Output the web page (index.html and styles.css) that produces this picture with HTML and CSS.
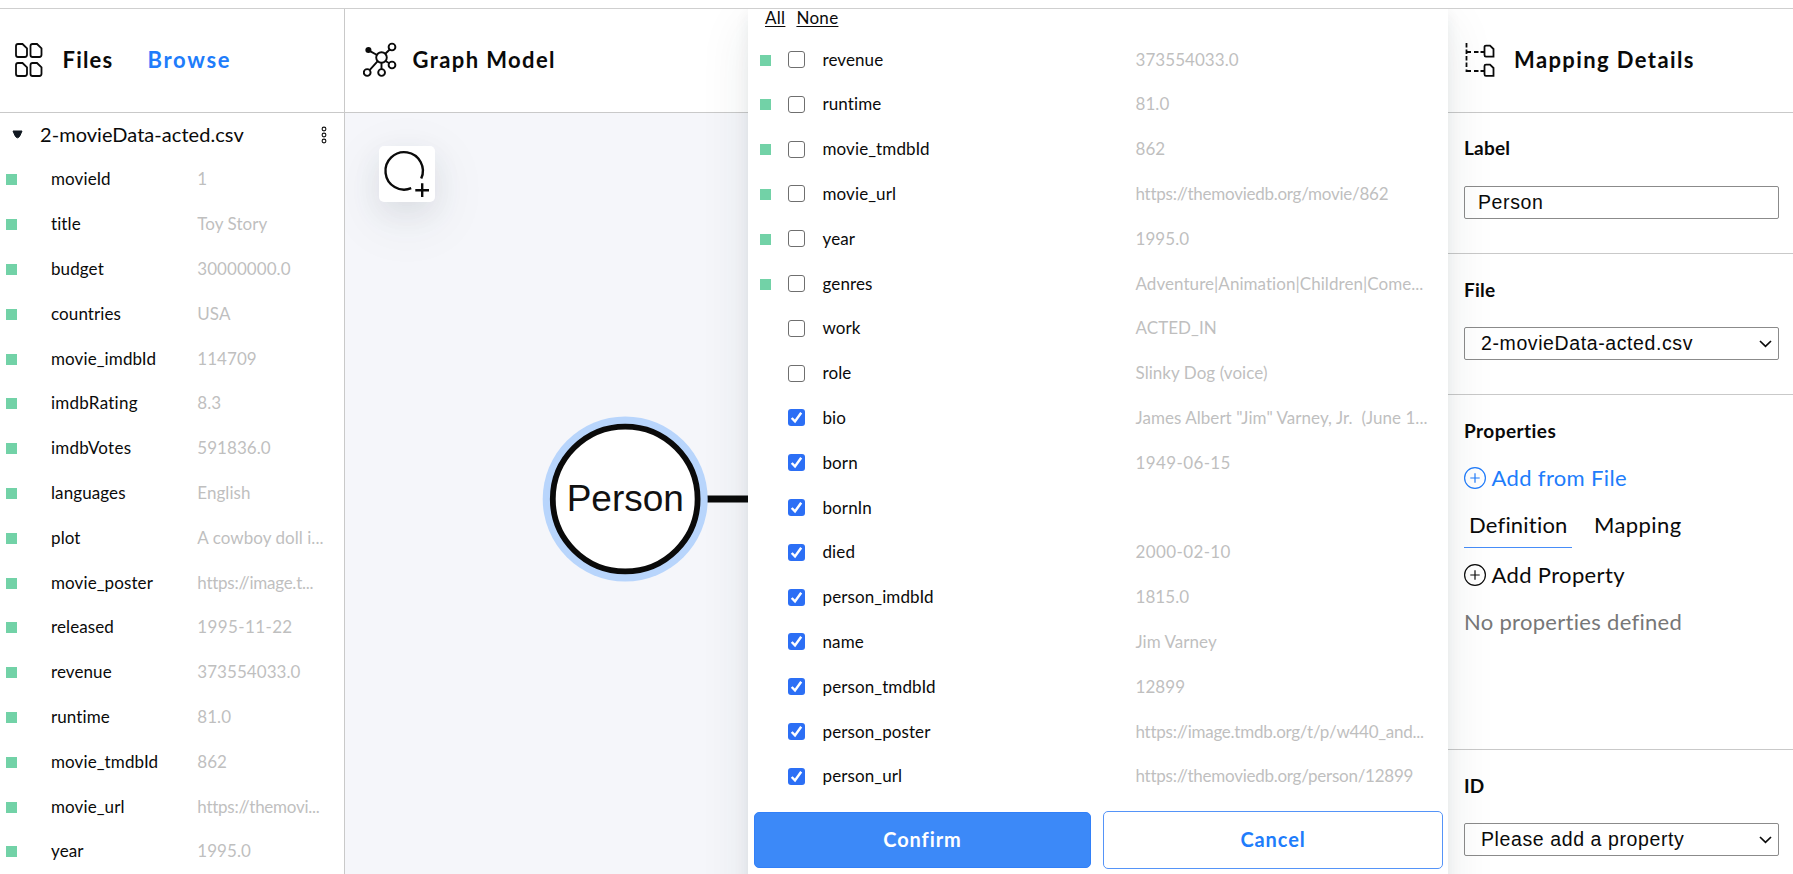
FILE: index.html
```html
<!DOCTYPE html>
<html lang="en">
<head>
<meta charset="utf-8">
<title>Graph Model</title>
<link rel="stylesheet" href="styles.css">
</head>
<body>
<div class="topbar"></div>
<main class="app">
  <section class="files">
    <header class="head head-files">
      <svg class="icon-files" width="28" height="35" viewBox="0 0 28 35" fill="none" stroke="#0a0a0a" stroke-width="1.8">
        <path id="doc" d="M3 1H7.5L12 5.3V11.8Q12 14 9.8 14H3Q1 14 1 12V3Q1 1 3 1Z"/>
        <use href="#doc" x="14.5"/><use href="#doc" y="19"/><use href="#doc" x="14.5" y="19"/>
      </svg>
      <h2 class="title t-files">Files</h2>
      <a class="title browse">Browse</a>
    </header>
    <div class="file-name">
      <svg width="11" height="10" viewBox="0 0 11 10"><path d="M1 1H10L8.2 5.2Q5.5 10.5 2.8 5.2Z" fill="#101820" stroke="#101820" stroke-linejoin="round"/></svg>
      <span class="csv">2-movieData-acted.csv</span>
      <svg class="dots" width="6" height="18" viewBox="0 0 6 18" fill="none" stroke="#111" stroke-width="1.1"><circle cx="3" cy="3" r="1.9"/><circle cx="3" cy="9" r="1.9"/><circle cx="3" cy="15" r="1.9"/></svg>
    </div>
    <ul class="rows">
      <li class="row"><i class="sq"></i><span class="key">movieId</span><span class="val">1</span></li>
      <li class="row"><i class="sq"></i><span class="key">title</span><span class="val">Toy Story</span></li>
      <li class="row"><i class="sq"></i><span class="key">budget</span><span class="val">30000000.0</span></li>
      <li class="row"><i class="sq"></i><span class="key">countries</span><span class="val">USA</span></li>
      <li class="row"><i class="sq"></i><span class="key">movie_imdbId</span><span class="val">114709</span></li>
      <li class="row"><i class="sq"></i><span class="key wide">imdbRating</span><span class="val">8.3</span></li>
      <li class="row"><i class="sq"></i><span class="key wide">imdbVotes</span><span class="val">591836.0</span></li>
      <li class="row"><i class="sq"></i><span class="key">languages</span><span class="val">English</span></li>
      <li class="row"><i class="sq"></i><span class="key">plot</span><span class="val">A cowboy doll i...</span></li>
      <li class="row"><i class="sq"></i><span class="key">movie_poster</span><span class="val url">https://image.t...</span></li>
      <li class="row"><i class="sq"></i><span class="key">released</span><span class="val date">1995-11-22</span></li>
      <li class="row"><i class="sq"></i><span class="key">revenue</span><span class="val">373554033.0</span></li>
      <li class="row"><i class="sq"></i><span class="key">runtime</span><span class="val">81.0</span></li>
      <li class="row"><i class="sq"></i><span class="key">movie_tmdbId</span><span class="val">862</span></li>
      <li class="row"><i class="sq"></i><span class="key">movie_url</span><span class="val url">https://themovi...</span></li>
      <li class="row"><i class="sq"></i><span class="key">year</span><span class="val">1995.0</span></li>
    </ul>
  </section>

  <section class="graph">
    <header class="head head-graph">
      <svg width="34" height="36" viewBox="0 0 34 36" fill="none" stroke="#0a0a0a" stroke-width="1.9">
        <circle cx="18.5" cy="15.5" r="5.3"/><circle cx="29" cy="5" r="3.4"/><circle cx="29" cy="23" r="3.4"/><circle cx="18.6" cy="30.5" r="3.4"/><circle cx="4.2" cy="30.5" r="3.4"/><circle cx="5.4" cy="8" r="2.1" fill="#0a0a0a"/>
        <path d="M7.5 9.3L14 13M22.3 11.8L26.7 7.5M22.5 19L26.3 21.2M18.5 20.8V27.1M14.7 19.2L6.6 28.1"/>
      </svg>
      <h2 class="title t-graph">Graph Model</h2>
    </header>
    <div class="canvas">
      <button class="add-node">
        <svg width="56" height="56" viewBox="0 0 56 56" fill="none" stroke="#0a0a0a" stroke-width="2.4"><path d="M32.2 42.2A18.7 18.7 0 1 1 42.2 32.6"/><path d="M43.2 37.3V51M36.3 44.2H50"/></svg>
      </button>
      <svg class="node" width="210" height="170" viewBox="540 414 210 170">
        <path d="M700 499H750" stroke="#0a0a0a" stroke-width="7"/>
        <circle cx="625.2" cy="499" r="82.5" fill="#b8d5fc"/>
        <circle cx="625.2" cy="499" r="72.4" fill="#fff" stroke="#0a0a0a" stroke-width="5.8"/>
        <text class="node-text" x="625.3" y="510.5" text-anchor="middle">Person</text>
      </svg>
    </div>
  </section>

  <section class="details">
    <header class="head head-details">
      <svg width="30" height="36" viewBox="0 0 30 36" fill="none" stroke="#0a0a0a" stroke-width="1.8">
        <path d="M1.5 1V5.5M1.5 7.5V12M1.5 14V18.5M1.5 20.5V25M1.5 27.5V29H6M9 29H13.5M15.5 29H19M1.5 10H6M9 10H13.5M15.5 10H19"/>
        <path d="M19.5 5Q19.5 3.6 21 3.6H25L28.5 7V14.6H21Q19.5 14.6 19.5 13ZM19.5 24Q19.5 22.6 21 22.6H25L28.5 26V33.8H21Q19.5 33.8 19.5 32.2Z"/>
      </svg>
      <h2 class="title t-details">Mapping Details</h2>
    </header>
    <div class="block b-label"><h3 class="sub">Label</h3><div class="field input">Person</div></div>
    <div class="block b-file"><h3 class="sub">File</h3><div class="field select"><span class="s-file">2-movieData-acted.csv</span><svg width="13" height="8" viewBox="0 0 13 8" fill="none" stroke="#0a0a0a" stroke-width="1.7"><path d="M1 1L6.5 6.3L12 1"/></svg></div></div>
    <div class="block b-props">
      <h3 class="sub s-props">Properties</h3>
      <div class="add blue"><svg width="22" height="22" viewBox="0 0 22 22" fill="none" stroke="currentColor" stroke-width="1.2"><circle cx="11" cy="11" r="10.4"/><path d="M11 6.3V15.7M6.3 11H15.7"/></svg><span class="a-file">Add from File</span></div>
      <div class="tabs"><span class="tab on">Definition</span><span class="tab t-map">Mapping</span></div>
      <div class="add"><svg width="22" height="22" viewBox="0 0 22 22" fill="none" stroke="currentColor" stroke-width="1.2"><circle cx="11" cy="11" r="10.4"/><path d="M11 6.3V15.7M6.3 11H15.7"/></svg><span class="a-prop">Add Property</span></div>
      <p class="empty">No properties defined</p>
    </div>
    <div class="block b-id"><h3 class="sub">ID</h3><div class="field select"><span class="s-id">Please add a property</span><svg width="13" height="8" viewBox="0 0 13 8" fill="none" stroke="#0a0a0a" stroke-width="1.7"><path d="M1 1L6.5 6.3L12 1"/></svg></div></div>
  </section>

  <div class="modal">
    <div class="pick"><u>All</u><u>None</u></div>
    <ul class="rows">
      <li class="row"><i class="sq"></i><i class="cb"></i><span class="key">revenue</span><span class="val">373554033.0</span></li>
      <li class="row"><i class="sq"></i><i class="cb"></i><span class="key">runtime</span><span class="val">81.0</span></li>
      <li class="row"><i class="sq"></i><i class="cb"></i><span class="key">movie_tmdbId</span><span class="val">862</span></li>
      <li class="row"><i class="sq"></i><i class="cb"></i><span class="key">movie_url</span><span class="val url">https://themoviedb.org/movie/862</span></li>
      <li class="row"><i class="sq"></i><i class="cb"></i><span class="key">year</span><span class="val">1995.0</span></li>
      <li class="row"><i class="sq"></i><i class="cb"></i><span class="key">genres</span><span class="val">Adventure|Animation|Children|Come...</span></li>
      <li class="row"><i class="sq none"></i><i class="cb"></i><span class="key">work</span><span class="val">ACTED_IN</span></li>
      <li class="row"><i class="sq none"></i><i class="cb"></i><span class="key">role</span><span class="val">Slinky Dog (voice)</span></li>
      <li class="row"><i class="sq none"></i><i class="cb on"><svg viewBox="0 0 17 17"><path d="M3.7 9L7 12.4L13.2 3.8"/></svg></i><span class="key">bio</span><span class="val">James Albert "Jim" Varney, Jr.  (June 1...</span></li>
      <li class="row"><i class="sq none"></i><i class="cb on"><svg viewBox="0 0 17 17"><path d="M3.7 9L7 12.4L13.2 3.8"/></svg></i><span class="key">born</span><span class="val date">1949-06-15</span></li>
      <li class="row"><i class="sq none"></i><i class="cb on"><svg viewBox="0 0 17 17"><path d="M3.7 9L7 12.4L13.2 3.8"/></svg></i><span class="key">bornIn</span></li>
      <li class="row"><i class="sq none"></i><i class="cb on"><svg viewBox="0 0 17 17"><path d="M3.7 9L7 12.4L13.2 3.8"/></svg></i><span class="key">died</span><span class="val date">2000-02-10</span></li>
      <li class="row"><i class="sq none"></i><i class="cb on"><svg viewBox="0 0 17 17"><path d="M3.7 9L7 12.4L13.2 3.8"/></svg></i><span class="key">person_imdbId</span><span class="val">1815.0</span></li>
      <li class="row"><i class="sq none"></i><i class="cb on"><svg viewBox="0 0 17 17"><path d="M3.7 9L7 12.4L13.2 3.8"/></svg></i><span class="key">name</span><span class="val">Jim Varney</span></li>
      <li class="row"><i class="sq none"></i><i class="cb on"><svg viewBox="0 0 17 17"><path d="M3.7 9L7 12.4L13.2 3.8"/></svg></i><span class="key">person_tmdbId</span><span class="val">12899</span></li>
      <li class="row"><i class="sq none"></i><i class="cb on"><svg viewBox="0 0 17 17"><path d="M3.7 9L7 12.4L13.2 3.8"/></svg></i><span class="key">person_poster</span><span class="val url">https://image.tmdb.org/t/p/w440_and...</span></li>
      <li class="row"><i class="sq none"></i><i class="cb on"><svg viewBox="0 0 17 17"><path d="M3.7 9L7 12.4L13.2 3.8"/></svg></i><span class="key">person_url</span><span class="val url">https://themoviedb.org/person/12899</span></li>
    </ul>
    <div class="actions"><button class="btn confirm">Confirm</button><button class="btn cancel">Cancel</button></div>
  </div>
</main>
</body>
</html>
```
FILE: styles.css
```css
* { box-sizing: border-box; }
body { margin: 0; height: 874px; overflow: hidden; background: #fff; color: #0a0a0a; font-family: Lato, sans-serif; font-size: 17px; }
svg { display: block; flex: none; }
h2, h3, p, ul { margin: 0; padding: 0; }
button { font-family: inherit; }
.topbar { height: 9px; border-bottom: 1px solid #cfcfcf; }
.app { position: relative; display: grid; grid-template-columns: 345px 1103px 345px; height: 865px; overflow: hidden; }
.head { display: flex; align-items: center; height: 104px; padding-bottom: 1px; border-bottom: 1px solid #c9c9c9; background: #fff; }
.title { font-size: 22px; font-weight: 700; line-height: 30px; white-space: nowrap; letter-spacing: 1.4px; }
.head-files { padding-left: 14.5px; }
.t-files { margin-left: 20px; width: 85px; letter-spacing: 1.2px; }
.browse { color: #207cfb; letter-spacing: 1.7px; }
.head-graph { padding-left: 17.5px; }
.t-graph { margin-left: 16px; }
.head-details { padding-left: 17px; }
.t-details { margin-left: 19px; }
.files { border-right: 1px solid #c9c9c9; background: #fff; }
.file-name { display: flex; align-items: center; height: 44px; padding: 0 17px 0 12px; font-size: 20px; }
.csv { margin-left: 17px; flex: 1; padding-bottom: 2px; white-space: nowrap; letter-spacing: .05px; }
.rows { list-style: none; }
.row { display: flex; align-items: center; height: 44.8px; padding-left: 6px; white-space: pre; }
.sq { width: 11px; height: 11px; background: #72d2a7; flex: none; position: relative; top: 0.5px; }
.sq.none { background: none; }
.key { margin-left: 34px; width: 146.3px; padding-bottom: 1px; letter-spacing: 0.1px; }
.key.wide { letter-spacing: .25px; }
.val { padding-bottom: 1px; color: #bfbfbf; letter-spacing: 0.05px; }
.val.url { letter-spacing: -.26px; }
.val.date { letter-spacing: .38px; }
.graph { display: flex; flex-direction: column; }
.canvas { flex: 1; position: relative; background: #f5f6fa; overflow: hidden; }
.add-node { position: absolute; left: 34px; top: 33px; width: 56px; height: 56px; padding: 0; border: 0; border-radius: 5px; background: #fff; box-shadow: 0 16px 60px rgba(40, 70, 80, .09), 0 10px 28px rgba(40, 50, 60, .08); }
.node { position: absolute; left: 195px; top: 301px; }
.node-text { font: 37px "Liberation Sans", Arial, sans-serif; fill: #111; }
.details { background: #fff; }
.block { padding: 0 14px 0 16px; border-bottom: 1px solid #c9c9c9; }
.sub { font-size: 19px; font-weight: 700; line-height: 26px; letter-spacing: .2px; }
.s-props { letter-spacing: .45px; }
.b-label { height: 141px; padding-top: 22px; }
.b-file { height: 141px; padding-top: 23px; }
.b-props { height: 355px; padding-top: 23px; }
.b-id { border: 0; padding-top: 23px; }
.field { display: flex; align-items: center; height: 33px; margin-top: 25px; border: 1px solid #8b8b8b; border-radius: 2px; background: #fff; font: 19.5px "Liberation Sans", Arial, sans-serif; letter-spacing: .6px; }
.b-file .field, .b-id .field { margin-top: 24px; }
.input { padding-left: 13px; }
.select { padding: 0 6px 0 16px; justify-content: space-between; }
.add { display: flex; align-items: center; gap: 5.5px; height: 30px; font-size: 22px; letter-spacing: .35px; }
.add span { padding-bottom: 2px; }
.blue { color: #207cfb; margin-top: 19px; }
.tabs { display: flex; height: 42px; margin: 13px 0 12px; font-size: 22px; line-height: 38px; letter-spacing: .2px; }
.tab { height: 42px; padding-left: 5px; }
.tab.on { width: 108px; border-bottom: 1px solid #478df8; }
.t-map { margin-left: 17px; letter-spacing: .4px; }
.empty { margin-top: 17px; color: #777; font-size: 22px; line-height: 30px; letter-spacing: .3px; }
.modal { position: absolute; left: 748px; top: 0; width: 700px; height: 920px; background: #fff; box-shadow: 0 16px 48px rgba(30, 55, 60, .09), 0 6px 14px rgba(30, 45, 55, .07); }
.pick { display: flex; gap: 11px; height: 28.2px; padding-left: 17px; line-height: 18px; letter-spacing: .3px; }
.pick u { height: 22px; text-underline-offset: 2px; text-decoration-thickness: 1px; }
.modal .row { padding-left: 12px; }
.cb { flex: none; width: 17px; height: 17px; margin-left: 17px; border: 1px solid #6f6f6f; border-radius: 3px; background: #fff; }
.cb.on { border: 0; background: #2c6ff5; }
.cb svg { fill: none; stroke: #fff; stroke-width: 2.5; }
.modal .key { margin-left: 17.5px; width: 313px; }
.actions { display: flex; gap: 12px; padding: 12px 5px 0 6px; }
.btn { height: 58px; padding-bottom: 3px; border-radius: 5px; font-size: 20px; font-weight: 700; letter-spacing: .9px; }
.confirm { width: 337px; height: 56px; margin-top: 1px; border: 1px solid #3280f8; background: #3c89f8; color: #fff; }
.cancel { width: 340px; border: 1px solid #5594f8; background: #fff; color: #207cfb; }
```
